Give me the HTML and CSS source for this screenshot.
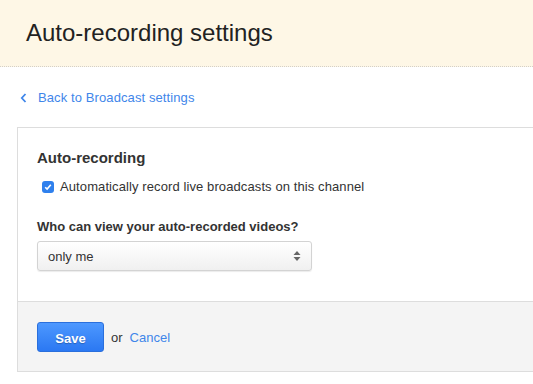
FILE: index.html
```html
<!DOCTYPE html>
<html lang="en">
<head>
    <meta charset="UTF-8">
    <title>Auto-recording settings</title>
    <link rel="stylesheet" href="styles.css">
</head>
<body>
    <header class="page-header">
        <h1>Auto-recording settings</h1>
    </header>
    <div class="back-row">
        <a href="#" class="back-link">
            <svg class="chevron" width="7" height="10" viewBox="0 0 7 10"><path d="M5.5 1 L1.8 5 L5.5 9" fill="none" stroke="#3f86ea" stroke-width="1.8"/></svg>
            <span>Back to Broadcast settings</span>
        </a>
    </div>
    <div class="card">
        <div class="card-body">
            <h2>Auto-recording</h2>
            <label class="check-row">
                <span class="checkbox">
                    <svg width="12" height="12" viewBox="0 0 12 12"><path d="M3.2 6.2 L5.1 8.1 L8.8 3.8" fill="none" stroke="#fff" stroke-width="1.6"/></svg>
                </span>
                Automatically record live broadcasts on this channel
            </label>
            <div class="question">Who can view your auto-recorded videos?</div>
            <div class="select">
                <span>only me</span>
                <svg class="arrows" width="8" height="12" viewBox="0 0 8 12"><path d="M4 1 L7.5 5 H0.5 Z M4 11 L7.5 7 H0.5 Z" fill="#666"/></svg>
            </div>
        </div>
        <div class="card-footer">
            <button class="save-btn">Save</button>
            <span class="or">or</span>
            <a href="#" class="cancel">Cancel</a>
        </div>
    </div>
</body>
</html>
```

FILE: styles.css
```css
body {
    margin: 0;
    font-family: "Liberation Sans", Arial, sans-serif;
    color: #333;
    background: #fff;
    overflow: hidden;
}
.page-header {
    background-color: #fef7e6;
    border-bottom: 1px dotted #d4d0c8;
    height: 67px;
    box-sizing: border-box;
    padding: 18px 26px 0;
}
.page-header h1 {
    margin: 0;
    font-size: 24px;
    line-height: 30px;
    font-weight: normal;
    color: #222;
}
.back-row {
    padding: 22px 0 0 20px;
    height: 38px;
}
.back-link {
    display: flex;
    align-items: center;
    text-decoration: none;
    color: #3f86ea;
    font-size: 13px;
    line-height: 18px;
    letter-spacing: 0.1px;
}
.chevron {
    margin-right: 11px;
}
.card {
    border: 1px solid #ddd;
    margin: 0 -20px 0 17px;
}
.card-body {
    padding: 21px 19px 30px;
}
.card-body h2 {
    margin: 0;
    font-size: 15px;
    line-height: 18px;
    font-weight: bold;
    color: #333;
}
.check-row {
    display: flex;
    align-items: center;
    margin: 11px 0 0 5px;
    font-size: 13px;
    line-height: 18px;
    color: #333;
    letter-spacing: 0.1px;
}
.checkbox {
    display: flex;
    width: 12px;
    height: 12px;
    border-radius: 3px;
    background: #2f80ed;
    margin-right: 6px;
}
.question {
    margin-top: 23px;
    font-size: 13px;
    line-height: 16px;
    font-weight: bold;
    color: #333;
}
.select {
    margin-top: 6px;
    width: 275px;
    height: 30px;
    box-sizing: border-box;
    border: 1px solid #d3d3d3;
    border-radius: 3px;
    background: linear-gradient(#fff, #f0f0f0);
    box-shadow: 0 1px 1px rgba(0, 0, 0, 0.08);
    display: flex;
    align-items: center;
    justify-content: space-between;
    padding: 0 10px 0 10px;
    font-size: 13px;
    color: #333;
}
.card-footer {
    background-color: #f4f4f4;
    border-top: 1px solid #ddd;
    padding: 20px 19px 19px;
    display: flex;
    align-items: center;
}
.save-btn {
    width: 67px;
    height: 30px;
    border: 1px solid #2a6fdc;
    border-radius: 3px;
    background: linear-gradient(#4d98ff, #2b78f2);
    color: #fff;
    font-family: "Liberation Sans", Arial, sans-serif;
    font-size: 13px;
    font-weight: bold;
    text-shadow: 0 1px 1px rgba(0, 0, 0, 0.25);
    padding: 2px 0 0;
}
.or {
    margin-left: 7px;
    font-size: 13px;
    color: #333;
}
.cancel {
    margin-left: 7px;
    font-size: 13px;
    color: #3f86ea;
    text-decoration: none;
}
```
